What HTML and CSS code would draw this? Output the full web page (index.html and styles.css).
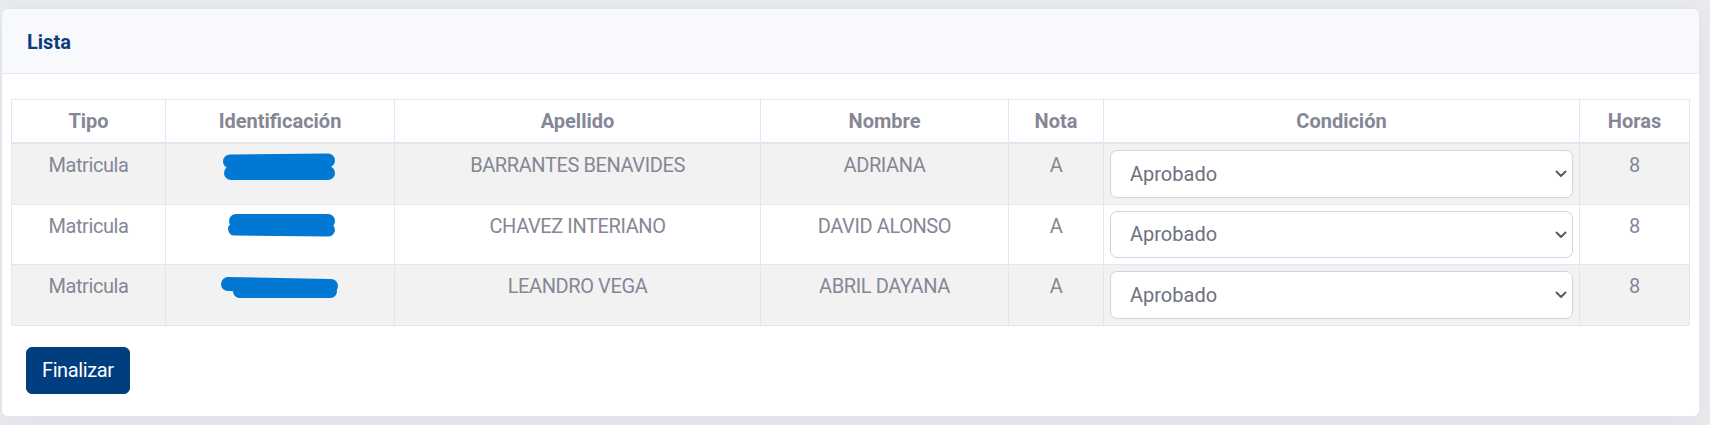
FILE: index.html
```html
<!DOCTYPE html>
<html lang="es">
<head>
<meta charset="utf-8">
<title>Lista</title>
<link rel="stylesheet" href="styles.css">
</head>
<body>
<div class="page">
  <div class="card">
    <div class="card-header">Lista</div>
    <div class="card-body">
      <table class="grid">
        <colgroup>
          <col class="c-tipo"><col class="c-id"><col class="c-ape"><col class="c-nom"><col class="c-nota"><col class="c-cond"><col class="c-horas">
        </colgroup>
        <thead>
          <tr>
            <th>Tipo</th><th>Identificación</th><th>Apellido</th><th>Nombre</th><th>Nota</th><th>Condición</th><th>Horas</th>
          </tr>
        </thead>
        <tbody>
          <tr>
            <td>Matricula</td>
            <td><span class="redact r1"><span class="bar b1"></span><span class="bar b2"></span></span></td>
            <td>BARRANTES BENAVIDES</td>
            <td>ADRIANA</td>
            <td>A</td>
            <td class="sel-cell"><div class="select-wrap"><select class="select"><option>Aprobado</option><option>Reprobado</option></select><svg class="chev" width="12" height="8" viewBox="0 0 12 8"><path d="M1.5 1.5 L6 6 L10.5 1.5" fill="none" stroke="#5a5c69" stroke-width="2" stroke-linecap="round" stroke-linejoin="round"/></svg></div></td>
            <td>8</td>
          </tr>
          <tr>
            <td>Matricula</td>
            <td><span class="redact r2"><span class="bar b1"></span><span class="bar b2"></span></span></td>
            <td>CHAVEZ INTERIANO</td>
            <td>DAVID ALONSO</td>
            <td>A</td>
            <td class="sel-cell"><div class="select-wrap"><select class="select"><option>Aprobado</option><option>Reprobado</option></select><svg class="chev" width="12" height="8" viewBox="0 0 12 8"><path d="M1.5 1.5 L6 6 L10.5 1.5" fill="none" stroke="#5a5c69" stroke-width="2" stroke-linecap="round" stroke-linejoin="round"/></svg></div></td>
            <td>8</td>
          </tr>
          <tr>
            <td>Matricula</td>
            <td><span class="redact r3"><span class="bar b1"></span><span class="bar b2"></span></span></td>
            <td>LEANDRO VEGA</td>
            <td>ABRIL DAYANA</td>
            <td>A</td>
            <td class="sel-cell"><div class="select-wrap"><select class="select"><option>Aprobado</option><option>Reprobado</option></select><svg class="chev" width="12" height="8" viewBox="0 0 12 8"><path d="M1.5 1.5 L6 6 L10.5 1.5" fill="none" stroke="#5a5c69" stroke-width="2" stroke-linecap="round" stroke-linejoin="round"/></svg></div></td>
            <td>8</td>
          </tr>
        </tbody>
      </table>
      <div class="actions">
        <button class="btn" type="button">Finalizar</button>
      </div>
    </div>
  </div>
</div>
</body>
</html>
```

FILE: styles.css
```css
* { box-sizing: border-box; }

html, body {
  margin: 0;
  background: #ebecf0;
}

body {
  font-family: Roboto, "Noto Sans", "Liberation Sans", sans-serif;
  font-size: 20px;
  line-height: 30px;
  color: #858796;
}

.page {
  padding: 8px 10px 8px 1px;
}

.card {
  background: #fff;
  border: 1px solid #e3e6f0;
  border-radius: 7px;
  box-shadow: 0 3px 30px rgba(58, 59, 69, 0.08);
  height: 409px;
}

.card-header {
  background: #f8f9fc;
  border-bottom: 1px solid #e3e6f0;
  border-radius: 7px 7px 0 0;
  padding: 18px 25px 16px;
  font-weight: 700;
  color: #0b3d7c;
}

.card-body {
  padding: 25px 10px 0 9px;
}

.grid {
  width: 100%;
  table-layout: fixed;
  border-collapse: collapse;
  color: #858796;
}

.c-tipo { width: 154px; }
.c-id { width: 229px; }
.c-ape { width: 366px; }
.c-nom { width: 248px; }
.c-nota { width: 95px; }
.c-cond { width: 476px; }
.c-horas { width: 110px; }

.grid th,
.grid td {
  border: 1px solid #e3e6f0;
  padding: 6px;
  text-align: center;
  vertical-align: top;
  line-height: 30px;
}

.grid td {
  letter-spacing: -0.4px;
}

.grid th {
  font-weight: 700;
  border-bottom-width: 2px;
}

.grid tbody tr:nth-child(odd) {
  background: #f2f2f2;
}

.sel-cell {
  text-align: left;
}

.select-wrap {
  position: relative;
}

.select {
  display: block;
  width: 100%;
  height: 47.5px;
  -webkit-appearance: none;
  appearance: none;
  background: #fff;
  border: 1px solid #d1d3e2;
  border-radius: 7px;
  padding: 0 30px 0 19px;
  font-family: inherit;
  font-size: 20px;
  letter-spacing: 0;
  color: #6e707e;
}

.chev {
  position: absolute;
  right: 6px;
  top: 20px;
  pointer-events: none;
}

.redact {
  display: inline-block;
  position: relative;
  width: 114px;
  height: 30px;
  vertical-align: top;
}

.bar {
  position: absolute;
  background: #0078d4;
  border-radius: 8px;
}

.r1 .b1 { left: 0; top: 4px; width: 112px; height: 14px; transform: rotate(-0.6deg); }
.r1 .b2 { left: 1px; top: 16px; width: 111px; height: 14px; }

.r2 .b1 { left: 6px; top: 3px; width: 106px; height: 14px; }
.r2 .b2 { left: 5px; top: 12px; width: 107px; height: 13px; transform: rotate(0.5deg); }

.r3 .b1 { left: -2px; top: 7px; width: 117px; height: 14px; transform: rotate(1deg); }
.r3 .b2 { left: 10px; top: 14px; width: 104px; height: 13px; }

.actions {
  padding: 21px 0 0 15px;
}

.btn {
  display: inline-block;
  height: 47.5px;
  padding: 0 15px;
  background: #013e7f;
  border: 1px solid #013e7f;
  border-radius: 6px;
  color: #fff;
  font-family: inherit;
  font-size: 20px;
  line-height: 30px;
  letter-spacing: -0.4px;
}
```
